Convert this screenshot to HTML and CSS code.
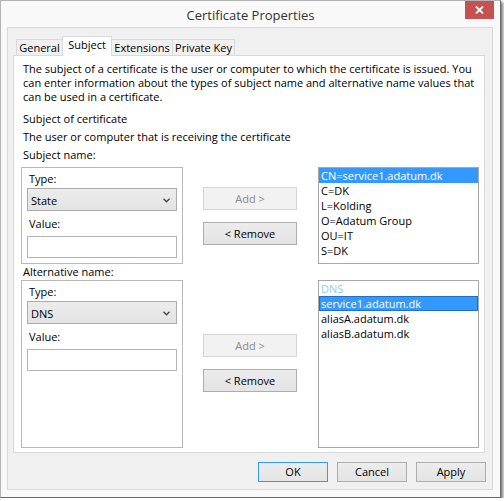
FILE: index.html
```html
<!DOCTYPE html>
<html>
<head>
<meta charset="utf-8">
<link rel="stylesheet" href="styles.css">
</head>
<body>
<div class="window">
  <div class="titlebar">
    <div class="title">Certificate Properties</div>
    <div class="close">
      <svg width="9" height="8" viewBox="0 0 9 8"><path d="M1 0.5 L8 7.5 M8 0.5 L1 7.5" stroke="#fff" stroke-width="1.8" fill="none"/></svg>
    </div>
  </div>
  <div class="client">
    <div class="tabs">
      <div class="tab t-general">General</div>
      <div class="tab t-subject active">Subject</div>
      <div class="tab t-ext">Extensions</div>
      <div class="tab t-pk">Private Key</div>
    </div>
    <div class="panel">
      <p class="intro">The subject of a certificate is the user or computer to which the certificate is issued. You<br>can enter information about the types of subject name and alternative name values that<br>can be used in a certificate.</p>
      <p class="heading">Subject of certificate</p>
      <p class="desc">The user or computer that is receiving the certificate</p>
      <div class="grid">
        <div class="glabel lbl1">Subject name:</div>
        <div class="group">
          <div class="flabel">Type:</div>
          <div class="select"><span>State</span><svg width="7" height="5" viewBox="0 0 7 5"><path d="M0.5 0.8 L3.5 3.8 L6.5 0.8" stroke="#444" stroke-width="1.3" fill="none"/></svg></div>
          <div class="flabel vlabel">Value:</div>
          <div class="input"></div>
        </div>
        <div class="buttons b1">
          <div class="btn disabled">Add &gt;</div>
          <div class="btn">&lt; Remove</div>
        </div>
        <div class="list list1">
          <div class="item selected">CN=service1.adatum.dk</div>
          <div class="item">C=DK</div>
          <div class="item">L=Kolding</div>
          <div class="item">O=Adatum Group</div>
          <div class="item">OU=IT</div>
          <div class="item">S=DK</div>
        </div>
        <div class="glabel lbl2">Alternative name:</div>
        <div class="group">
          <div class="flabel">Type:</div>
          <div class="select"><span>DNS</span><svg width="7" height="5" viewBox="0 0 7 5"><path d="M0.5 0.8 L3.5 3.8 L6.5 0.8" stroke="#444" stroke-width="1.3" fill="none"/></svg></div>
          <div class="flabel vlabel">Value:</div>
          <div class="input"></div>
        </div>
        <div class="buttons b2">
          <div class="btn disabled">Add &gt;</div>
          <div class="btn">&lt; Remove</div>
        </div>
        <div class="list list2">
          <div class="item header">DNS</div>
          <div class="item selected focus">service1.adatum.dk</div>
          <div class="item">aliasA.adatum.dk</div>
          <div class="item">aliasB.adatum.dk</div>
        </div>
      </div>
    </div>
    <div class="footer">
      <div class="btn fbtn default">OK</div>
      <div class="btn fbtn">Cancel</div>
      <div class="btn fbtn">Apply</div>
    </div>
  </div>
</div>
</body>
</html>
```
FILE: styles.css
```css
* { box-sizing: border-box; }
html, body { margin: 0; padding: 0; background: #ffffff; }
body {
  font-family: "Open Sans", "Noto Sans", sans-serif;
  font-size: 11px;
  color: #000;
}
.window {
  width: 501px;
  height: 498px;
  background: #f9f9f9;
  border: 1px solid #b4b4b4;
  border-right-color: #6a6a6a;
  border-bottom-color: #6a6a6a;
  box-shadow: 2px 2px 3px rgba(0,0,0,0.55);
  display: flex;
  flex-direction: column;
}
.titlebar {
  height: 26px;
  display: grid;
  grid-template-columns: 1fr auto 1fr;
  align-items: start;
}
.title {
  grid-column: 2;
  font-size: 13px;
  line-height: 26px;
  padding-top: 1px;
  color: #333;
}
.close {
  grid-column: 3;
  justify-self: end;
  width: 29px;
  height: 18px;
  margin-right: 6px;
  background: #c75050;
  display: flex;
  align-items: center;
  justify-content: center;
}
.client {
  flex: 1;
  margin: 0 7px 7px 6px;
  border: 1px solid #d9d9d9;
  background: #f0f0f0;
  display: flex;
  flex-direction: column;
}
.tabs {
  display: flex;
  align-items: flex-end;
  height: 19px;
  margin: 8px 0 0 5px;
  padding-left: 3px;
  position: relative;
  z-index: 1;
}
.tab {
  height: 16px;
  border: 1px solid #d9d9d9;
  border-bottom: none;
  background: #f0f0f0;
  text-align: center;
  line-height: 15px;
  margin-right: -1px;
  white-space: nowrap;
}
.tab.active {
  height: 20px;
  margin-bottom: -1px;
  background: #fff;
  position: relative;
  z-index: 2;
}
.t-general { width: 47px; }
.t-subject { width: 50px; }
.t-ext { width: 62px; }
.t-pk { width: 63px; }
.panel {
  width: 472px;
  height: 398px;
  margin-left: 5px;
  border: 1px solid #d9d9d9;
  background: #fff;
  padding: 6px 4px 0 7px;
}
.panel p { margin: 0 0 0 2px; line-height: 14px; white-space: nowrap; }
.heading { margin-top: 8px !important; }
.desc { margin-top: 4px !important; }
.grid {
  margin-top: 4px;
  display: grid;
  grid-template-columns: 162px 94px 162px;
  grid-template-rows: 19px 97px 16px 168px;
  column-gap: 20px;
}
.glabel {
  grid-column: 1;
  padding-left: 2px;
  line-height: 14px;
  white-space: nowrap;
}
.lbl2 { line-height: 15px; }
.group {
  grid-column: 1;
  border: 1px solid #b9b9b9;
  padding: 0 5px;
}
.flabel {
  margin-top: 4px;
  padding-left: 2px;
  line-height: 14px;
}
.vlabel { margin-top: 6px; }
.select {
  margin-top: 2px;
  height: 23px;
  border: 1px solid #acacac;
  background: linear-gradient(#ececec, #e3e3e3);
  display: flex;
  align-items: center;
  justify-content: space-between;
  padding: 1px 6px 0 3px;
}
.select span { line-height: 15px; }
.input {
  margin-top: 5px;
  height: 22px;
  border: 1px solid #b4b4b4;
  background: #fff;
}
.buttons {
  grid-column: 2;
  display: flex;
  flex-direction: column;
  gap: 12px;
}
.b1 { padding-top: 20px; }
.b2 { padding-top: 54px; }
.btn {
  height: 23px;
  border: 1px solid #adadad;
  background: linear-gradient(#ececec, #e3e3e3);
  text-align: center;
  line-height: 21px;
  white-space: nowrap;
}
.btn.disabled {
  border-color: #d5d5d5;
  background: #f2f2f2;
  color: #8a8a8a;
}
.list {
  grid-column: 3;
  justify-self: end;
  width: 161px;
  border: 1px solid #a8a8a8;
  background: #fff;
}
.item {
  height: 15px;
  line-height: 15px;
  padding-left: 2px;
  white-space: nowrap;
}
.item.selected { background: #3399ff; color: #fff; }
.item.focus { box-shadow: inset 0 0 0 1px #1f6fc5; }
.item.header { color: #8fcbf2; }
.footer {
  margin-top: 9px;
  display: flex;
  justify-content: flex-end;
  gap: 9px;
  padding-right: 6px;
}
.fbtn {
  width: 70px;
  height: 20px;
  line-height: 18px;
}
.fbtn.default { border-color: #3399ff; }
```
